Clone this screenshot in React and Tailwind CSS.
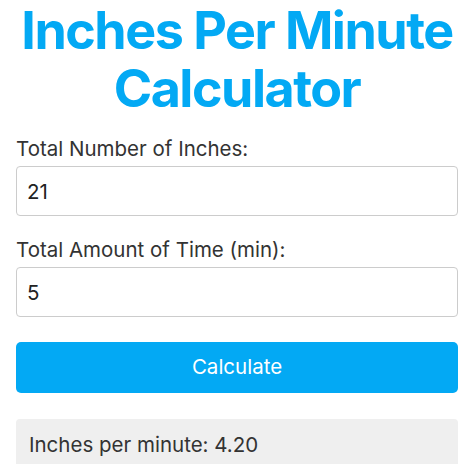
import React from 'react';

export default function App() {
  const [inches, setInches] = React.useState('21');
  const [minutes, setMinutes] = React.useState('5');
  const [result, setResult] = React.useState('4.20');

  const calculate = () => {
    const i = parseFloat(inches);
    const m = parseFloat(minutes);
    if (!isNaN(i) && !isNaN(m) && m !== 0) setResult((i / m).toFixed(2));
  };

  return (
    <div className="min-h-screen bg-white px-4 font-['Inter','Liberation_Sans',sans-serif] text-[#333]">
      {/* Title */}
      <h1 className="pt-[2px] text-center text-[52px] leading-[58px] font-bold tracking-[-1.5px] text-[#03a9f4]">
        Inches Per Minute Calculator
      </h1>

      {/* Form */}
      <div className="mt-[16px]">
        <label className="block text-[20.5px] leading-[30px] mb-[2px]">Total Number of Inches:</label>
        <input
          value={inches}
          onChange={(e) => setInches(e.target.value)}
          className="block w-full h-[50px] px-[10px] text-[20.5px] text-[#222] bg-white border border-[#ccc] rounded-[4px] outline-none"
        />
      </div>

      <div className="mt-[19px]">
        <label className="block text-[20.5px] leading-[30px] mb-[2px]">Total Amount of Time (min):</label>
        <input
          value={minutes}
          onChange={(e) => setMinutes(e.target.value)}
          className="block w-full h-[50px] px-[10px] text-[20.5px] text-[#222] bg-white border border-[#ccc] rounded-[4px] outline-none"
        />
      </div>

      <button
        onClick={calculate}
        className="mt-[25px] w-full h-[51px] rounded-[5px] bg-[#03a9f4] text-white text-[20.5px]"
      >
        Calculate
      </button>

      <div className="mt-[26px] bg-[#efefef] rounded-[4px] px-[13px] pt-[11px] pb-[14px] text-[20.5px] leading-[30px] text-[#333]">
        Inches per minute: {result}
      </div>
    </div>
  );
}
